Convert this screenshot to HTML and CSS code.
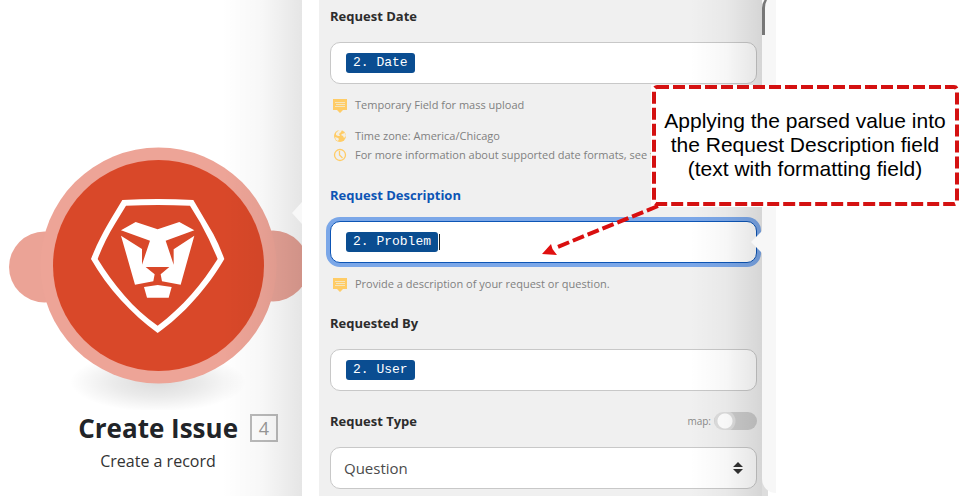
FILE: index.html
```html
<!DOCTYPE html>
<html lang="en">

	<head>
		<meta charset="UTF-8">
		<title>Create Issue</title>
		<link rel="stylesheet" href="styles.css">
	</head>

	<body>
		<!-- shared icons -->
		<svg class="defs" aria-hidden="true">
			<symbol id="note" viewBox="0 0 16 16">
				<path fill="#fc6" d="M1 2h14v11h-4l-3 3-3-3H1z" />
				<path stroke="#f5e5bd" d="M3 5.5h10M4 7.5h9M3 9.5h10" />
			</symbol>
			<symbol id="globe" viewBox="0 0 16 16">
				<circle cx="8" cy="8" r="6" fill="#fc6" />
				<path fill="#f4eee0" d="M7 2l3 0-1 2-2 2 1 2-2 0-2-1 0-2zM10 6l3-1 1 3-2 2-1-2-2-1zM3 9l3 1 1 1-1 2-2-1z" />
			</symbol>
			<symbol id="clock" viewBox="0 0 16 16">
				<circle cx="8" cy="8" r="5.500" fill="none" stroke="#fc6" stroke-width="1.300" />
				<path fill="none" stroke="#fc6" stroke-width="1.300" d="M7.500 4v4l3 3" />
			</symbol>
		</svg>

		<div class="page">
			<section class="canvas">
				<svg class="module" viewBox="0 140 302 270" role="img" aria-label="Create Issue module">
					<defs>
						<radialGradient id="floor">
							<stop offset="0" stop-color="#000" stop-opacity=".14" />
							<stop offset=".5" stop-color="#000" stop-opacity=".08" />
							<stop offset="1" stop-color="#000" stop-opacity="0" />
						</radialGradient>
					</defs>
					<ellipse cx="158" cy="382" rx="88" ry="30" fill="url(#floor)" />
					<circle cx="44.500" cy="267" r="35.500" fill="#eba396" />
					<circle cx="273" cy="266" r="35.500" fill="#e8a397" />
					<circle cx="158.500" cy="265.500" r="118" fill="#eda497" />
					<circle cx="158.500" cy="265.500" r="105.500" fill="#d94829" />
					<g transform="translate(80 180) scale(.3333)" fill="#fff">
						<path fill-rule="evenodd" d="M127 60Q233 54 340 60L400 162Q418 195 433 237C384 322 310 405 233 459C154 401 83 325 33 237C52 188 72 152 95 113zM138 77L105 131Q72 185 53 237C100 313 160 387 233 437C309 380 365 313 413 237Q390 180 361 128L330 77Q233 73 138 77z" />
						<path d="M123 151L167 126L233 148L298 126L343 151L257 182L281 254V208L343 167L302 314L246 304L242 283L268 261H197L224 283L220 304L165 314L123 167L186 207V254L210 182z" />
						<path d="M192 321L233 315L275 321L266 353H201z" />
					</g>
				</svg>
				<div class="module-title">
					<h1>Create Issue</h1>
					<span class="num">4</span>
				</div>
				<p class="module-sub">Create a record</p>
			</section>

			<form class="panel">
				<div class="field">
					<label for="date">Request Date</label>
					<div class="box">
						<span class="chip">2. Date</span>
						<input type="text" id="date">
					</div>
					<ul class="hints">
						<li class="first"><svg><use href="#note" /></svg>Temporary Field for mass upload</li>
						<li><svg><use href="#globe" /></svg>Time zone: America/Chicago</li>
						<li><svg><use href="#clock" /></svg>For more information about supported date formats, see the</li>
					</ul>
				</div>

				<div class="field active">
					<label for="desc">Request Description</label>
					<div class="box">
						<span class="chip">2. Problem</span>
						<span class="caret"></span>
						<input type="text" id="desc">
					</div>
					<ul class="hints">
						<li><svg><use href="#note" /></svg>Provide a description of your request or question.</li>
					</ul>
				</div>

				<div class="field">
					<label for="user">Requested By</label>
					<div class="box">
						<span class="chip">2. User</span>
						<input type="text" id="user">
					</div>
				</div>

				<div class="field">
					<div class="row">
						<label for="type">Request Type</label>
						<label class="map" for="map">map:</label>
						<input type="checkbox" class="switch" id="map">
					</div>
					<div class="box select">
						<select id="type">
							<option>Question</option>
						</select>
						<svg class="arrows" viewBox="0 0 10 12"><path fill="#333" d="M5 0l5 5H0zM5 12L0 7h10z" /></svg>
					</div>
				</div>
			</form>

			<div class="side">
				<div class="sheet"></div>
			</div>
		</div>

		<div class="callout">
			<svg class="frame" viewBox="0 0 308 122" aria-hidden="true">
				<rect x="3" y="2" width="303" height="117" rx="3" />
			</svg>
			<p>Applying the parsed value into<br>the Request Description field<br>(text with formatting field)</p>
		</div>
		<svg class="pointer" viewBox="0 0 120 54" aria-hidden="true">
			<path class="line" d="M117 3L14 45" />
			<path class="head" d="M1 51L10 41L11.500 46L16 52z" />
		</svg>
	</body>

</html>
```

FILE: styles.css
```css
* {
	margin: 0;
	padding: 0;
	box-sizing: border-box;
}

body {
	position: relative;
	background: #fff;
	font-family: "Open Sans", "Noto Sans", sans-serif;
	overflow: hidden;
}

.defs {
	position: absolute;
	width: 0;
	height: 0;
}

.page {
	display: grid;
	grid-template-columns: 302fr 460fr 198fr;
	min-height: 100vh;
}

/* left: scenario module */
.canvas {
	position: relative;
	padding-top: 140px;
	overflow: hidden;
}

.canvas::before {
	content: "";
	position: absolute;
	top: 0;
	right: 0;
	bottom: 0;
	width: 80px;
	background: linear-gradient(to right, transparent, rgba(0, 0, 0, .03) 50%, rgba(0, 0, 0, .1));
}

.canvas::after {
	content: "";
	position: absolute;
	top: 202px;
	right: 0;
	width: 10px;
	height: 22px;
	background: #f8f8f8;
	clip-path: polygon(0 50%, 100% 0, 100% 100%);
}

.module {
	display: block;
	width: 100%;
}

.module-title {
	display: flex;
	justify-content: flex-end;
	align-items: center;
	gap: 12px;
	padding: 2px 24px 0 0;
}

.module-title h1 {
	font-size: 26px;
	line-height: 32px;
	color: #212428;
	white-space: nowrap;
}

.num {
	width: 28px;
	border: 2px solid #bbb;
	font-size: 18px;
	line-height: 24px;
	text-align: center;
	color: #999;
}

.module-sub {
	padding: 5px 0 0 14px;
	font-size: 16px;
	line-height: 24px;
	text-align: center;
	color: #333;
}

/* middle: form */
.panel {
	position: relative;
	border-left: 17px solid #fff;
	padding: 6px 5px 0 11px;
	background: #f0f0f0;
}

.panel::before {
	content: "";
	position: absolute;
	z-index: 1;
	top: 0;
	right: 0;
	bottom: 0;
	width: 72px;
	background: linear-gradient(to right, transparent, rgba(0, 0, 0, .03) 50%, rgba(0, 0, 0, .11));
	pointer-events: none;
}

.panel::after {
	content: "";
	position: absolute;
	z-index: 2;
	top: 231px;
	right: 0;
	width: 11px;
	height: 22px;
	background: #f7f7f7;
	clip-path: polygon(0 50%, 100% 0, 100% 100%);
}

.field {
	margin-bottom: 20px;
}

.field:last-child {
	margin-bottom: 0;
}

.field label {
	display: block;
	font-size: 13px;
	line-height: 20px;
	font-weight: bold;
	color: #2c2c2c;
}

.active label {
	color: #0d55b5;
}

.box {
	display: flex;
	align-items: center;
	height: 42px;
	margin-top: 16px;
	padding: 0 15px;
	border: 1px solid #c8c8c8;
	border-radius: 10px;
	background: #fff;
}

.box input {
	flex: 1;
	min-width: 0;
	border: 0;
	outline: 0;
	background: none;
}

.active .box {
	border-color: #0d55b5;
	box-shadow: 0 0 0 4px #7ba7e8;
}

.chip {
	padding: 0 7px;
	border-radius: 3px;
	background: #0a4d91;
	color: #fff;
	font-family: "Liberation Mono", monospace;
	font-size: 13px;
	line-height: 20px;
	white-space: pre;
}

.caret {
	width: 1px;
	height: 16px;
	margin-left: 1px;
	background: #222;
}

.hints {
	margin-top: 11px;
	list-style: none;
	font-size: 11px;
	line-height: 19px;
	color: #808080;
}

.hints li {
	display: flex;
	align-items: center;
	gap: 7px;
	padding-left: 2px;
	white-space: nowrap;
}

.hints svg {
	flex: none;
	width: 16px;
	height: 16px;
}

.hints .first {
	margin-bottom: 12px;
}

.hints li:last-child:not(:first-child) {
	padding-bottom: 1px;
}

.row {
	display: flex;
	align-items: center;
}

.row .map {
	margin: 0 3px 0 auto;
	font-size: 10px;
	font-weight: normal;
	color: #888;
}

.switch {
	appearance: none;
	width: 43px;
	height: 18px;
	border-radius: 9px;
	background: radial-gradient(circle at 11px 9px, #fff 7px, #ddd 8px, #ddd 10px, #ccc 11px);
}

.select {
	padding: 0 13px;
}

.select select {
	appearance: none;
	flex: 1;
	border: 0;
	outline: 0;
	background: none;
	font-family: inherit;
	font-size: 15px;
	color: #4b4b4b;
}

.arrows {
	width: 10px;
	height: 12px;
}

/* right: edge of the next sheet */
.side {
	background: linear-gradient(to right, #ddd 6px, #fff 6px);
}

.sheet {
	position: relative;
	width: 14px;
	height: calc(100% - 3px);
	border-radius: 0 0 0 14px;
	background: #f7f7f7;
}

.sheet::before {
	content: "";
	position: absolute;
	top: -6px;
	left: 0;
	width: 14px;
	height: 41px;
	border-left: 3px solid #777;
	border-radius: 14px 0 0 0;
}

/* note with arrow over the form */
.callout {
	position: absolute;
	z-index: 3;
	top: 85px;
	left: 651px;
	width: 308px;
	height: 122px;
	padding-top: 24px;
	background: #fff;
	font-family: "Liberation Sans", Arial, sans-serif;
	font-size: 21px;
	line-height: 24px;
	text-align: center;
	color: #000;
	white-space: nowrap;
}

.frame {
	position: absolute;
	top: 0;
	left: 0;
	width: 308px;
	height: 122px;
}

.frame rect {
	fill: none;
	stroke: #d41111;
	stroke-width: 4;
	stroke-dasharray: 12 4;
}

.pointer {
	position: absolute;
	z-index: 4;
	top: 203px;
	left: 541px;
	width: 120px;
	height: 54px;
}

.pointer .line {
	stroke: #d90f0f;
	stroke-width: 4;
	stroke-dasharray: 12 4;
}

.pointer .head {
	fill: #e01010;
}
```
